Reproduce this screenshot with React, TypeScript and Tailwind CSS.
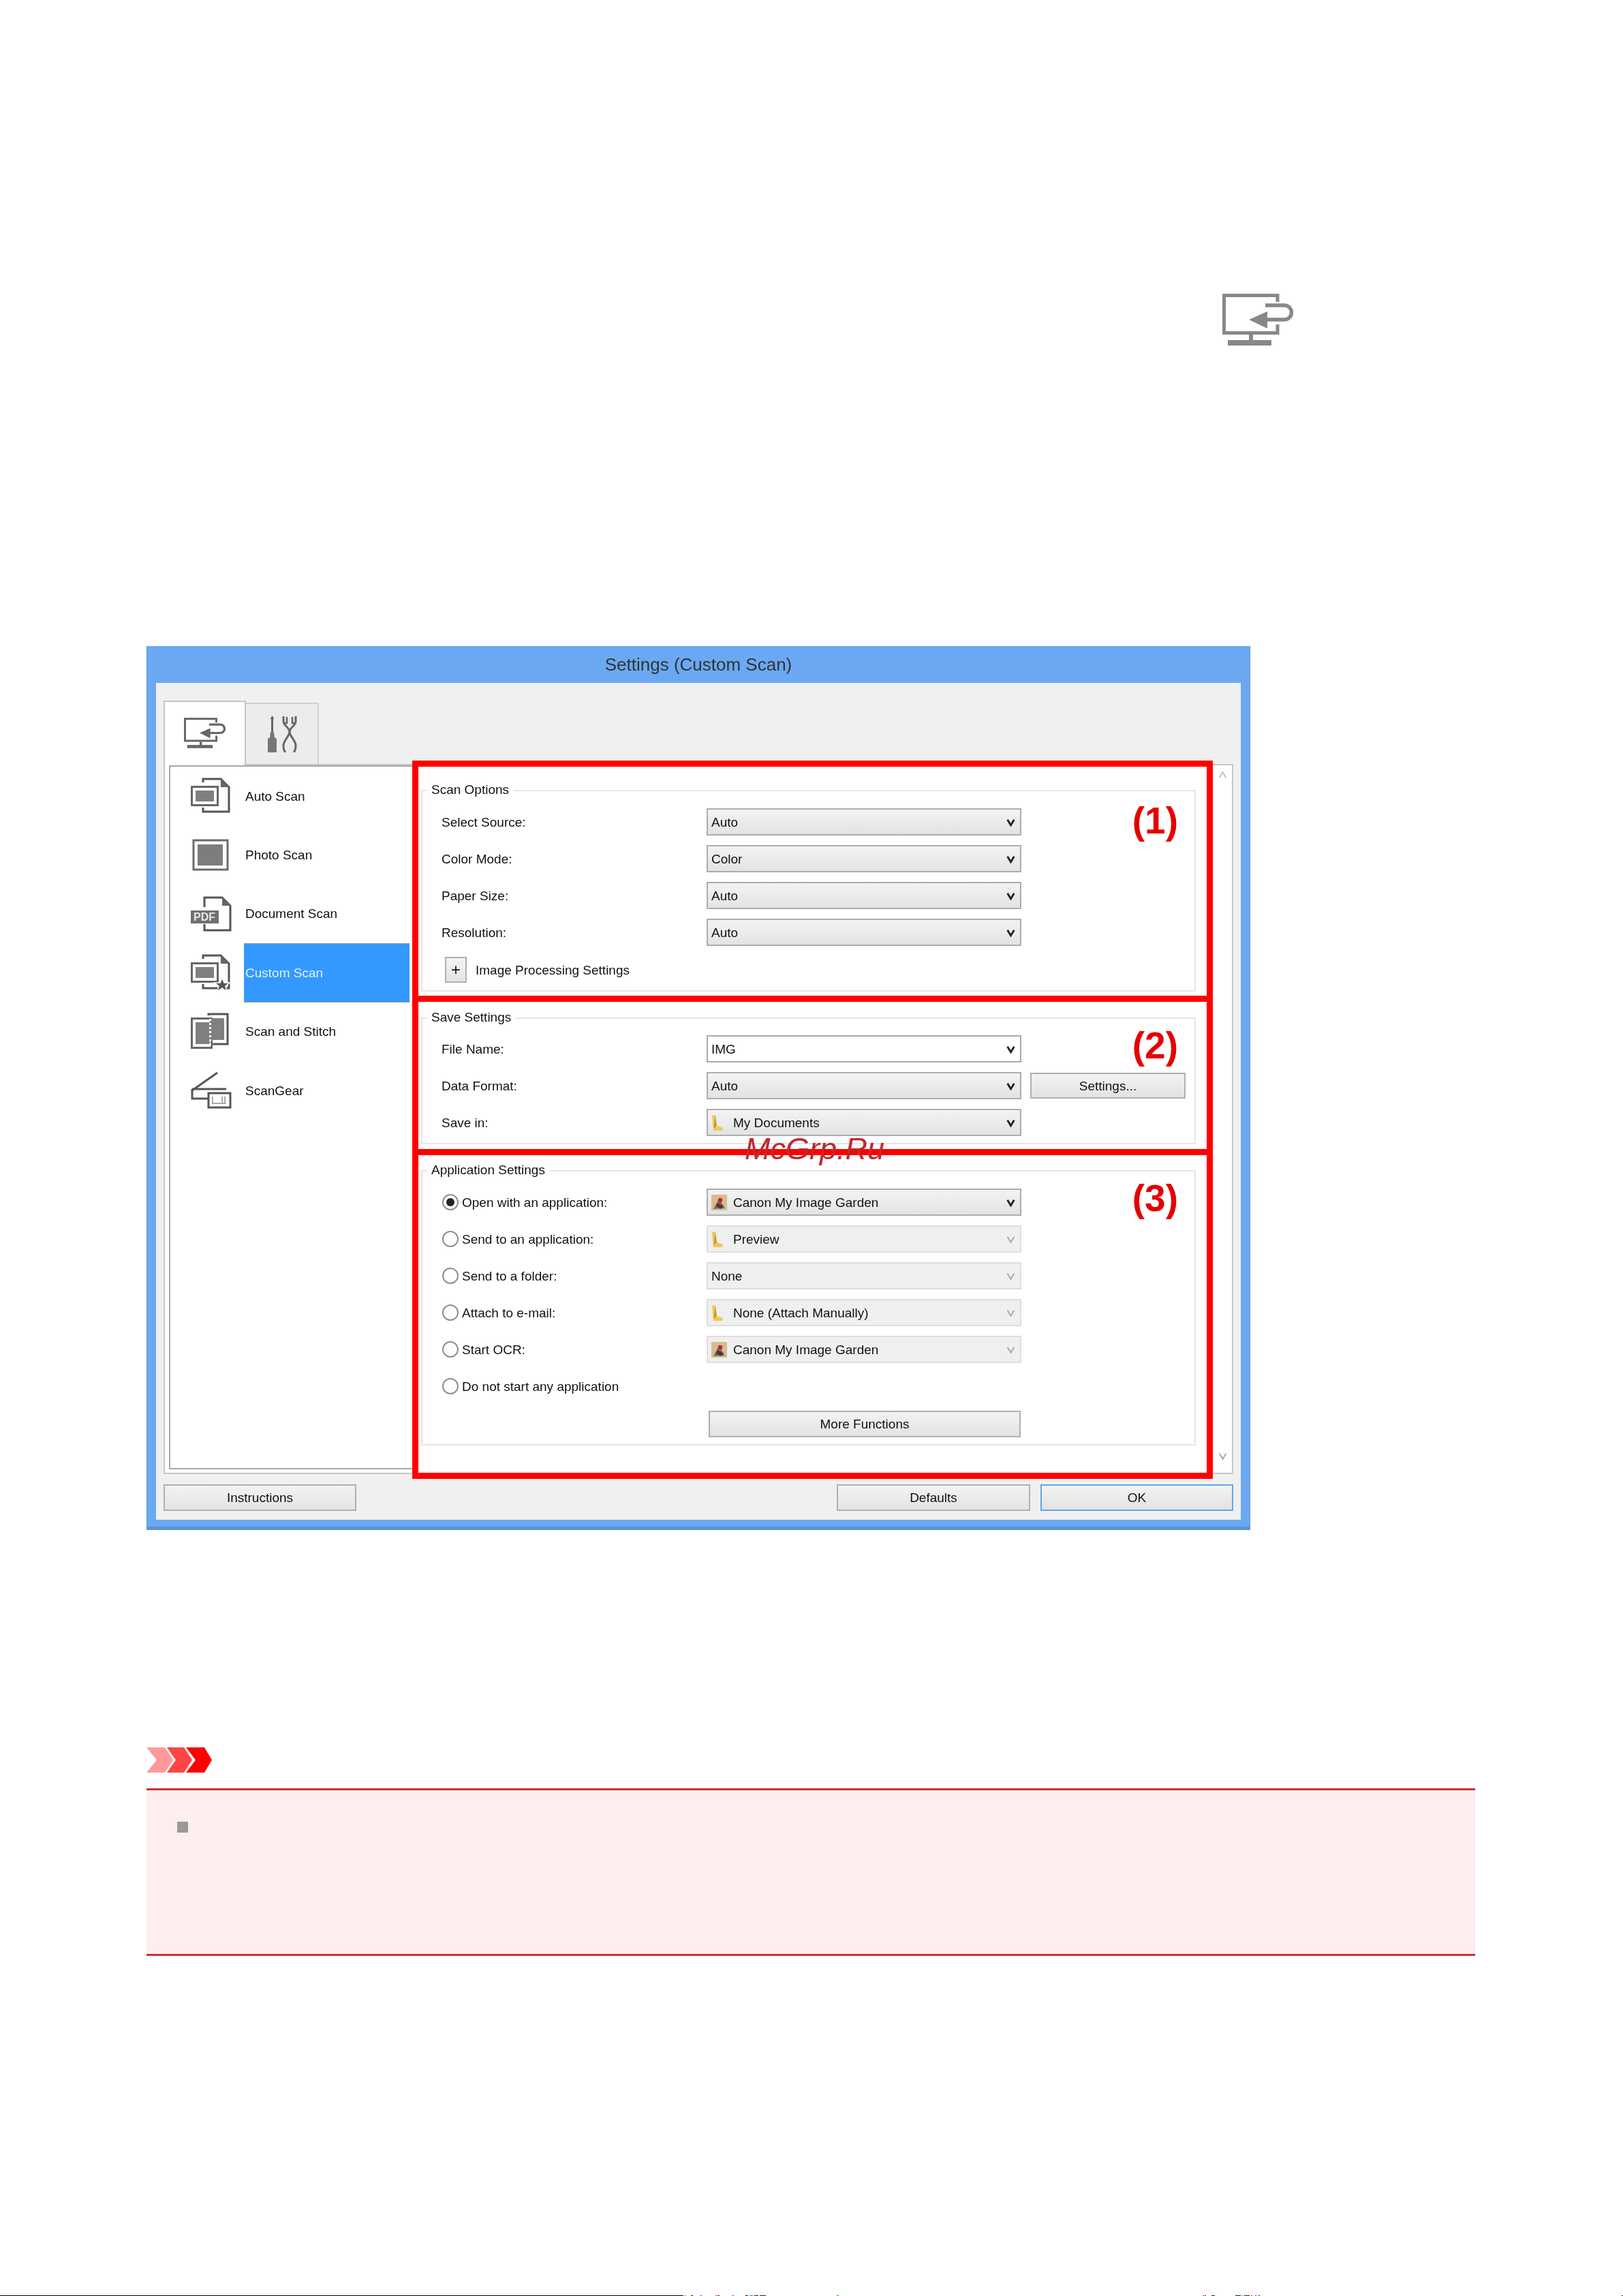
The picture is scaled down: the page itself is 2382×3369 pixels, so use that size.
import React from "react";

const btnSkin = "bg-linear-to-b from-[#f3f3f3] to-[#e3e3e3] border-2 text-[#111] flex items-center justify-center";
const btn = `${btnSkin} border-[#b0b0b0]`;

function MonitorIcon({ className, color }: { className: string; color: string }) {
  return (
    <svg viewBox="0 0 104 76" className={className} fill="none" stroke={color}>
      <path d="M81 12V2.5H2.5V57.5H81V45" strokeWidth="5" />
      <path d="M63 17H91A10.5 10.5 0 0 1 91 38H62" strokeWidth="5.5" />
      <path d="M39 38L66 26V51Z" fill={color} stroke="none" />
      <rect x="39" y="60" width="6" height="9" fill={color} stroke="none" />
      <rect x="8" y="68" width="64" height="8" fill={color} stroke="none" />
    </svg>
  );
}

function ToolsIcon() {
  return (
    <svg viewBox="0 0 44 54" className="w-[44px] h-[54px]" fill="none" stroke="#666">
      <path d="M7.5 0L4.5 5H10.5Z" fill="#666" stroke="none" />
      <path d="M7.5 3V24" strokeWidth="3" />
      <path d="M4 32L5 24H10L11 32L14 34V54H1V34Z" fill="#777" stroke="none" />
      <path d="M24 1V9C24 14 33 18 33 24C33 30 24 36 24 44C24 48 25 52 27 54" strokeWidth="3" />
      <path d="M42 1V9C42 14 33 18 33 24C33 30 42 36 42 44C42 48 41 52 39 54" strokeWidth="3" />
      <path d="M24 11H29V2M42 11H37V2" strokeWidth="2.5" />
    </svg>
  );
}

function Stack({ star }: { star?: boolean }) {
  return (
    <svg viewBox="0 0 58 58" className="w-[58px] h-[58px]" fill="none">
      <path d="M18 9V4H44L56 16V52H18V46" stroke="#555" strokeWidth="3" />
      <path d="M44 4V16H56Z" fill="#666" />
      <rect x="1.5" y="15.5" width="38" height="27" fill="#fff" stroke="#666" strokeWidth="3" />
      <rect x="7" y="21" width="27" height="16" fill="#808080" />
      {star && <path d="M46 37L49 44H57L51 49L53 57L46 52L39 57L41 49L35 44H43Z" fill="#555" stroke="#fff" strokeWidth="1.5" />}
    </svg>
  );
}

function PhotoIcon() {
  return (
    <svg viewBox="0 0 58 58" className="w-[58px] h-[58px]" fill="none">
      <rect x="4" y="7" width="50" height="43" stroke="#6a6a6a" strokeWidth="3" />
      <rect x="10" y="13" width="37" height="31" fill="#7d7d7d" />
    </svg>
  );
}

function DocIcon() {
  return (
    <svg viewBox="0 0 60 58" className="w-[60px] h-[58px]" fill="none">
      <path d="M20 19V5H46L58 17V53H20V44" stroke="#555" strokeWidth="3" />
      <path d="M46 5V17H58Z" fill="#666" />
      <rect x="0" y="24" width="41" height="19" fill="#707070" />
      <text x="20" y="39" textAnchor="middle" fontSize="16" fill="#e8e8e8" fontFamily="Liberation Sans" fontWeight="700">PDF</text>
    </svg>
  );
}

function StitchIcon() {
  return (
    <svg viewBox="0 0 56 58" className="w-[56px] h-[58px]" fill="none">
      <path d="M26 5V3H54V47H32" stroke="#555" strokeWidth="3" />
      <rect x="1.5" y="9.5" width="29" height="43" stroke="#666" strokeWidth="3" />
      <rect x="7" y="15" width="21" height="32" fill="#808080" />
      <rect x="28" y="9" width="21" height="32" fill="#808080" />
      <path d="M28.5 10V50" stroke="#fff" strokeWidth="3" strokeDasharray="3 3" />
    </svg>
  );
}

function GearIcon() {
  return (
    <svg viewBox="0 0 60 58" className="w-[60px] h-[58px]" fill="none" stroke="#555">
      <path d="M2 29L39 3" strokeWidth="3" />
      <path d="M2 27H52" strokeWidth="3" />
      <path d="M2 27V41H26" strokeWidth="3" />
      <rect x="26" y="33" width="32" height="21" fill="#fff" strokeWidth="3" />
      <path d="M32 38V48H52M46 38V48M50 38V48" stroke="#aaa" strokeWidth="2" />
    </svg>
  );
}

function Chevron({ muted }: { muted?: boolean }) {
  return (
    <svg viewBox="0 0 12 12" className="w-[13px] h-[13px]" fill="none" stroke={muted ? "#a8a8a8" : "#222"} strokeWidth={muted ? 1.8 : 2.6}>
      <path d="M1.5 2.5L6 10L10.5 2.5" />
    </svg>
  );
}

function Folder() {
  return (
    <svg viewBox="0 0 18 25" className="w-[18px] h-[25px] shrink-0">
      <path d="M1 1L6 2L8 17L17 20L16 24L3 24Z" fill="#f0c94f" />
      <path d="M6 2L8 17L3 21Z" fill="#c99a2e" />
    </svg>
  );
}

function Garden() {
  return (
    <svg viewBox="0 0 23 23" className="w-[23px] h-[23px] shrink-0">
      <rect width="23" height="23" fill="#d5bd92" />
      <path d="M3 21L11 6L20 20Z" fill="#8a6a45" />
      <circle cx="13" cy="8" r="3.2" fill="#c8232c" />
      <path d="M9 12L18 17L14 21L7 17Z" fill="#3a3d4a" />
    </svg>
  );
}

function Select({ text, icon, disabled, white }: { text: string; icon?: "folder" | "garden"; disabled?: boolean; white?: boolean }) {
  const box = white
    ? "bg-white border-[#a9a9a9]"
    : disabled
    ? "bg-[#efefef] border-[#dedede]"
    : "bg-linear-to-b from-[#f3f3f3] to-[#e3e3e3] border-[#adadad]";
  return (
    <div className={`w-[462px] h-10 border-2 ${box} flex items-center pl-[5px] pr-[7px] text-[#111]`}>
      {icon && <span className="w-[32px] flex items-center">{icon === "folder" ? <Folder /> : <Garden />}</span>}
      <span className="flex-1 pt-[1px]">{text}</span>
      <Chevron muted={disabled} />
    </div>
  );
}

function Row({ label, children }: { label: string; children: React.ReactNode }) {
  return (
    <div className="flex items-center h-10 pl-[28px]">
      <span className="w-[389px] text-[#111]">{label}</span>
      {children}
    </div>
  );
}

function RadioRow({ label, checked, children }: { label: string; checked?: boolean; children?: React.ReactNode }) {
  return (
    <div className="flex items-center h-10 pl-[29px]">
      <span className="w-[388px] flex items-center gap-[5px] text-[#111]">
        <span className="w-6 h-6 rounded-full border-2 border-[#8f8f8f] bg-white flex items-center justify-center">
          {checked && <span className="w-[12px] h-[12px] rounded-full bg-[#222]" />}
        </span>
        {label}
      </span>
      {children}
    </div>
  );
}

function Group({ title, note, noteClass, className, children }: { title: string; note?: string; noteClass?: string; className: string; children: React.ReactNode }) {
  return (
    <div className={`relative ml-1 mr-4 border-2 border-[#e6e6e6] ${className}`}>
      <span className="absolute -top-[14px] left-[7px] bg-white px-[6px] leading-[24px] text-[#111]">{title}</span>
      {note && (
        <span className={`absolute right-[24px] font-bold text-[55px] leading-[62px] text-[#e50000] ${noteClass}`}>{note}</span>
      )}
      {children}
    </div>
  );
}

const items: { label: string; icon: React.ReactNode; on?: boolean }[] = [
  { label: "Auto Scan", icon: <Stack /> },
  { label: "Photo Scan", icon: <PhotoIcon /> },
  { label: "Document Scan", icon: <DocIcon /> },
  { label: "Custom Scan", icon: <Stack star />, on: true },
  { label: "Scan and Stitch", icon: <StitchIcon /> },
  { label: "ScanGear", icon: <GearIcon /> },
];

const specks: [number, number, string][] = [
  [1002, 2, "#1a9"], [1006, 1, "#c33"], [1014, 3, "#222"], [1028, 2, "#33c"], [1050, 2, "#c33"], [1053, 3, "#222"],
  [1075, 2, "#33c"], [1094, 4, "#222"], [1100, 5, "#38c"], [1107, 6, "#222"], [1115, 9, "#222"], [1228, 3, "#292"],
  [1765, 2, "#c33"], [1768, 2, "#222"], [1778, 5, "#222"], [1813, 8, "#222"], [1822, 2, "#3a8"], [1826, 8, "#222"],
  [1836, 2, "#c33"], [1842, 2, "#33c"], [1847, 2, "#222"], [2380, 2, "#222"],
];

export default function App() {
  return (
    <div className="relative w-[2382px] h-[3369px] bg-white overflow-hidden flex flex-col font-['Liberation_Sans',sans-serif] text-[19px] leading-none">
      <div className="h-[431px] shrink-0 pl-[1794px] pt-[431px]">
        <MonitorIcon className="w-[104px] h-[76px] block" color="#888888" />
      </div>

      <div className="mt-[517px] ml-[215px] w-[1620px] h-[1297px] shrink-0 bg-[#6aa9f2] border-b-[5px] border-b-[#5c93d0] border-x border-x-[#5c93d0] flex flex-col blur-[0.7px]">
        <div className="h-[54px] shrink-0 flex items-center justify-center text-[26px] text-[#333]">Settings (Custom Scan)</div>
        <div className="mx-[13px] mb-[10px] flex-1 bg-[#f0f0f0] pt-[26px] px-[11px] flex flex-col">
          <div className="flex items-end h-[93px] shrink-0">
            <div className="relative z-10 -mb-[2px] w-[121px] h-[95px] bg-white border-2 border-b-0 border-[#c4c4c4] flex items-center justify-center pb-[3px]">
              <MonitorIcon className="w-[61px] h-[45px]" color="#666666" />
            </div>
            <div className="w-[107px] h-[90px] bg-[#ececec] border-2 border-l-0 border-b-0 border-[#cfcfcf] flex items-center justify-center">
              <ToolsIcon />
            </div>
          </div>

          <div className="flex h-[1042px] shrink-0 bg-white border-2 border-[#c8c8c8] pl-[6px]">
            <div className="w-[357px] shrink-0 mb-[5px] border-l-2 border-b-2 border-t-2 border-[#a8a8a8]">
              {items.map((it) => (
                <div key={it.label} className="flex h-[86.4px]">
                  <div className="w-[108px] shrink-0 pl-[30px] flex items-center">{it.icon}</div>
                  <div className={`flex-1 flex items-center pl-[2px] mr-[4px] ${it.on ? "bg-[#3399ff] text-[#dff0ff] border-y border-[#9a9a7a]" : "text-[#111]"}`}>
                    {it.label}
                  </div>
                </div>
              ))}
            </div>

            <div className="relative z-10 w-[1175px] shrink-0 -mt-[7px] -mb-[9px] flex flex-col">
              <div className="h-[354px] border-[9px] border-[#ff0000] bg-white pt-[34px]">
                <Group title="Scan Options" note="(1)" noteClass="top-[12px]" className="h-[296px] pt-[25px]">
                  <div className="flex flex-col gap-[14px]">
                    <Row label="Select Source:"><Select text="Auto" /></Row>
                    <Row label="Color Mode:"><Select text="Color" /></Row>
                    <Row label="Paper Size:"><Select text="Auto" /></Row>
                    <Row label="Resolution:"><Select text="Auto" /></Row>
                  </div>
                  <div className="mt-4 pl-[33px] flex items-center gap-[13px] text-[#111]">
                    <span className={`w-[32px] h-[38px] ${btn} text-[24px]`}>+</span>
                    Image Processing Settings
                  </div>
                </Group>
              </div>

              <div className="h-[225px] border-[9px] border-t-0 border-[#ff0000] bg-white pt-[23px]">
                <Group title="Save Settings" note="(2)" noteClass="top-[8px]" className="h-[186px] pt-[24px]">
                  <div className="flex flex-col gap-[14px]">
                    <Row label="File Name:"><Select text="IMG" white /></Row>
                    <Row label="Data Format:">
                      <Select text="Auto" />
                      <span className={`ml-[13px] w-[228px] h-[38px] ${btn}`}>Settings...</span>
                    </Row>
                    <Row label="Save in:"><Select text="My Documents" icon="folder" /></Row>
                  </div>
                </Group>
              </div>

              <div className="h-[475px] border-[9px] border-t-0 border-[#ff0000] bg-white pt-[22px]">
                <Group title="Application Settings" note="(3)" noteClass="top-[8px]" className="h-[404px] pt-[25px]">
                  <div className="flex flex-col gap-[14px]">
                    <RadioRow label="Open with an application:" checked><Select text="Canon My Image Garden" icon="garden" /></RadioRow>
                    <RadioRow label="Send to an application:"><Select text="Preview" icon="folder" disabled /></RadioRow>
                    <RadioRow label="Send to a folder:"><Select text="None" disabled /></RadioRow>
                    <RadioRow label="Attach to e-mail:"><Select text="None (Attach Manually)" icon="folder" disabled /></RadioRow>
                    <RadioRow label="Start OCR:"><Select text="Canon My Image Garden" icon="garden" disabled /></RadioRow>
                    <RadioRow label="Do not start any application" />
                  </div>
                  <div className={`mt-[16px] ml-[420px] w-[458px] h-[39px] ${btn}`}>More Functions</div>
                </Group>
              </div>
            </div>

            <div className="flex-1 flex flex-col items-center justify-between pt-[8px] pb-[16px] mb-[2px]">
              <svg viewBox="0 0 12 12" className="w-[13px] h-[13px]" fill="none" stroke="#bdbdbd" strokeWidth="1.6"><path d="M1.5 9.5L6 2L10.5 9.5" /></svg>
              <Chevron muted />
            </div>
          </div>

          <div className="mt-[15px] flex">
            <div className={`w-[283px] h-[39px] ${btn}`}>Instructions</div>
            <div className={`ml-auto w-[284px] h-[39px] ${btn}`}>Defaults</div>
            <div className={`ml-[15px] w-[283px] h-[39px] ${btnSkin} border-[#5fa5ea]`}>OK</div>
          </div>
        </div>
      </div>

      <span className="absolute left-[1093px] top-[1660px] text-[45px] leading-[52px] italic text-[#c0282d]">McGrp.Ru</span>

      <svg viewBox="0 0 96 37" className="mt-[319px] ml-[215px] w-[96px] h-[37px] shrink-0">
        <path d="M0 0H27L39 18.5L27 37H0L15 18.5Z" fill="#ff9999" />
        <path d="M30 0H55L67 18.5L55 37H30L43 18.5Z" fill="#ff4444" />
        <path d="M58 0H85L96 18.5L85 37H58L72 18.5Z" fill="#ff0000" />
      </svg>

      <div className="mt-[23px] ml-[215px] w-[1950px] h-[246px] shrink-0 bg-[#feeeee] border-y-[3px] border-[#cc3333] pl-[45px] pt-[46px]">
        <div className="w-4 h-4 bg-[#999999]" />
      </div>

      <div className="mt-auto h-px flex relative">
        <div className="w-[1002px] h-px bg-black" />
        {specks.map(([x, w, c]) => (
          <span key={x} className="absolute top-0 h-px" style={{ left: x, width: w, background: c }} />
        ))}
      </div>
    </div>
  );
}
